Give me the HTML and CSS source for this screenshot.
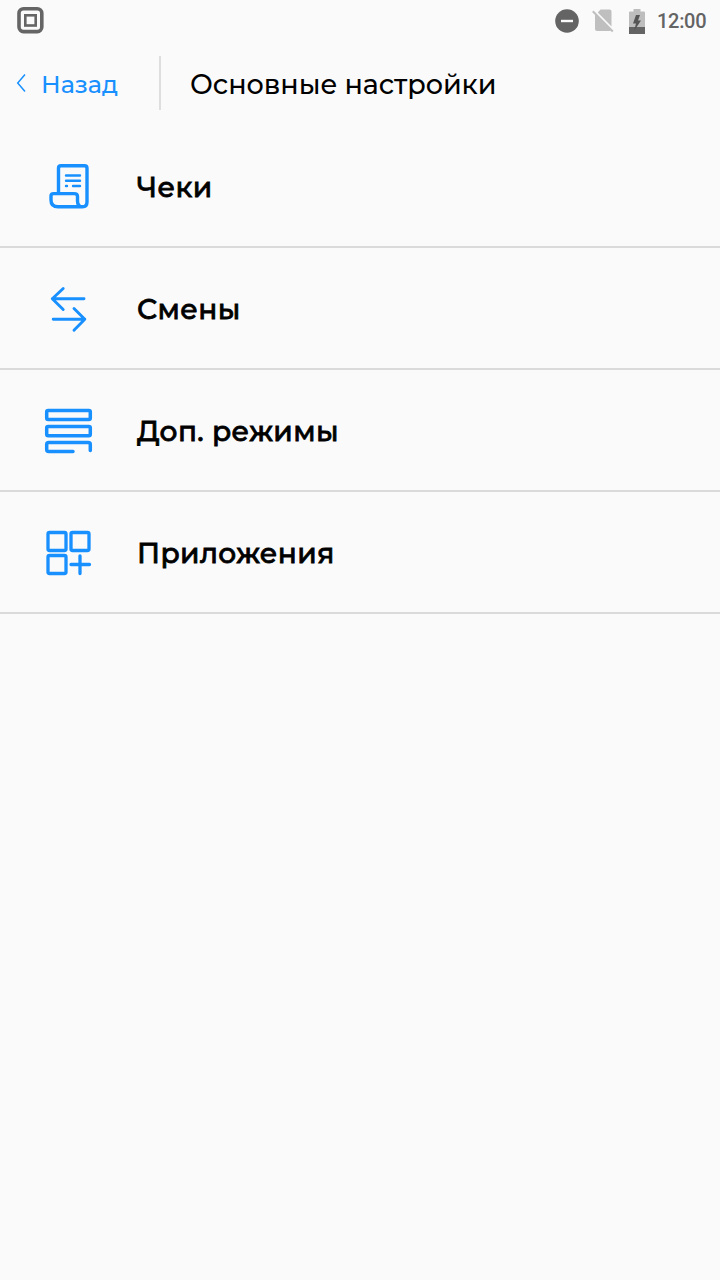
FILE: index.html
```html
<!DOCTYPE html>
<html lang="ru">
<head>
<meta charset="utf-8">
<title>Основные настройки</title>
<link rel="stylesheet" href="styles.css">
</head>
<body>
<div class="status">
  <svg class="status-app" width="28" height="28" viewBox="0 0 28 28"><rect x="3" y="2.800" width="22.800" height="22.800" rx="4.500" fill="none" stroke="#656565" stroke-width="3.600"/><rect x="9.300" y="9.300" width="10.400" height="10.200" fill="none" stroke="#656565" stroke-width="2.600"/></svg>
  <svg class="status-dnd" width="24" height="24" viewBox="0 0 24 24"><circle cx="12" cy="12" r="11.800" fill="#646464"/><path d="M6 12H18" stroke="#fafafa" stroke-width="2.400"/></svg>
  <svg class="status-sim" width="22" height="24" viewBox="0 0 22 24"><path d="M8.500 .5H17.500Q19.500 .5 19.500 2.500V17.500L5.800 3.500ZM3 4.500L19 21Q18.500 22 17.500 22H5Q3 22 3 20Z" fill="#bfbfbf"/><path d="M.8 2.300L20.800 22.500" stroke="#bfbfbf" stroke-width="2"/></svg>
  <svg class="status-battery" width="16" height="25" viewBox="0 0 16 25"><path d="M4.500 0H11.500V2.500H15Q16 2.500 16 3.500V18H0V3.500Q0 2.500 1 2.500H4.500Z" fill="#bdbdbd"/><path d="M0 18H16V25H0Z" fill="#646464"/><path d="M7 6H11L9 11.500H12L5 22L7 14.500H4Z" fill="#555"/></svg>
  <span class="clock">12:00</span>
</div>
<header class="header">
  <a class="back">
    <svg width="10" height="20" viewBox="0 0 10 20"><path d="M9 1.500L1.700 10L9 18.500" fill="none" stroke="#1890ff" stroke-width="1.500"/></svg>
    <span>Назад</span>
  </a>
  <h1 class="title">Основные настройки</h1>
</header>
<main class="menu">
  <div class="row">
    <svg class="icon" width="80" height="70" viewBox="0 0 80 70"><path d="M28.500 42V17Q28.500 14.800 31 14.800H54.500Q57 14.800 57 17.300V51Q57 55.800 52.500 55.800H28Q21 55.800 21 49V45Q21 42.600 23.500 42.600H44Q47.500 42.600 47.500 45.300V50Q47.500 54.800 51.500 55.800" stroke-width="3.400"/><path d="M36 24.500H50M36 29.800H50M36 35H37M43 35H50" stroke-width="2.400"/></svg>
    <span class="label">Чеки</span>
  </div>
  <div class="row">
    <svg class="icon" width="80" height="70" viewBox="0 0 80 70"><path d="M33.200 14.500L22.300 24.800L33.200 35.500M22.300 24.700H54M44 34.500L54.800 45.300L44 56.200M23.200 45.300H54.800" stroke-width="2.900" transform="translate(0 1)"/></svg>
    <span class="label">Смены</span>
  </div>
  <div class="row">
    <svg class="icon" width="80" height="70" viewBox="0 0 80 70"><g stroke-width="3.500"><rect x="16.700" y="15.600" width="43.600" height="8.800" rx="1.500"/><rect x="16.700" y="31.500" width="43.600" height="9.200" rx="1.500"/><path d="M43 56.500H18.700Q16.700 56.500 16.700 54.500V49.500Q16.700 47.500 18.700 47.500H58.300Q60.300 47.500 60.300 49.500V55.500"/></g></svg>
    <span class="label">Доп. режимы</span>
  </div>
  <div class="row">
    <svg class="icon" width="80" height="70" viewBox="0 0 80 70"><g stroke-width="3.300"><rect x="18" y="15.500" width="18" height="18" rx="1.500"/><rect x="41" y="15.500" width="18" height="18" rx="1.500"/><rect x="18" y="38.500" width="18" height="18" rx="1.500"/><path d="M50 38.800V56.500M41 47.500H59.500"/></g></svg>
    <span class="label">Приложения</span>
  </div>
</main>
</body>
</html>
```
FILE: styles.css
```css
* { box-sizing: border-box; }
body {
  margin: 0;
  min-height: 1280px;
  background: #fafafa;
  color: #000;
  font-family: Montserrat, Inter, "Noto Sans", sans-serif;
}
.status {
  display: flex;
  align-items: center;
  height: 42px;
  padding: 0 14px 0 16px;
}
.status svg { flex: none; }
.status-app { margin-right: auto; margin-bottom: 2px; }
.status-sim { margin-left: 13px; }
.status-battery { margin-left: 15px; }
.clock {
  width: 49px;
  margin-left: 12px;
  color: #646464;
  font: 500 20px/24px Roboto, sans-serif;
  letter-spacing: -.3px;
  white-space: nowrap;
}
.header {
  display: flex;
  height: 84px;
  padding-top: 14px;
}
.back {
  display: flex;
  align-items: center;
  width: 161px;
  height: 54px;
  padding: 4px 0 0 16px;
  border-right: 2px solid #dedede;
  color: #1890ff;
  font-size: 24px;
  font-weight: 500;
  line-height: 30px;
}
.back svg { margin: 0 15px 4px 0; }
.title {
  margin: 0 0 0 29px;
  font-size: 27px;
  font-weight: 500;
  line-height: 58px;
  letter-spacing: -.05px;
  white-space: nowrap;
}
.row {
  display: flex;
  align-items: center;
  height: 122px;
  padding-left: 30px;
  border-bottom: 2px solid #dadada;
}
.icon {
  flex: none;
  fill: none;
  stroke: #1890ff;
  stroke-linecap: round;
  stroke-linejoin: round;
}
.label {
  margin-left: 27px;
  padding-top: 1px;
  font-size: 28px;
  font-weight: 500;
  line-height: 36px;
  letter-spacing: .4px;
  -webkit-text-stroke: .8px #000;
  white-space: nowrap;
}
```
